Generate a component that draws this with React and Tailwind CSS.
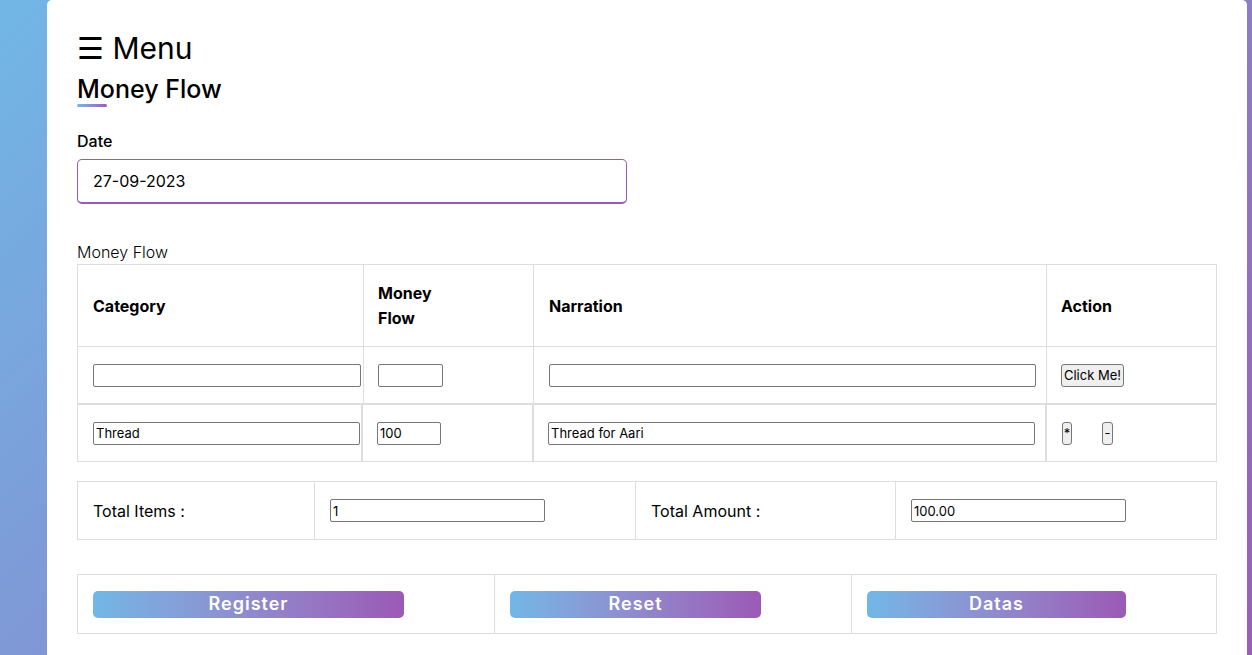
import React, { useState } from 'react';

const inputCls = 'h-[23px] border border-[#767676] rounded-[2px] bg-white px-[2px] text-[13px] text-black outline-none';
const smallBtn = 'h-[23px] border border-[#767676] rounded-[3px] bg-[#efefef] text-[13px] text-black leading-none';
const gradBtn = 'h-[27px] rounded-[5px] bg-gradient-to-r from-[#71b7e6] to-[#9b59b6] text-white text-[18px] font-semibold tracking-[1px] leading-none';

const App = () => {
  const [date, setDate] = useState('27-09-2023');
  const [rows] = useState([{ category: 'Thread', amount: '100', narration: 'Thread for Aari' }]);

  return (
    <div className="min-h-screen bg-[linear-gradient(135deg,#71b7e6,#9b59b6)] bg-[length:100%_760px] bg-no-repeat font-['Inter',sans-serif] text-black flex">
      <div className="ml-[47px] w-[1200px] bg-white rounded-t-[5px] px-[30px] pt-[25px]">
        <div className="h-[45px] flex items-center text-[30px] leading-none">☰ Menu</div>

        {/* title with underline */}
        <div className="relative h-[38px] flex items-center text-[25px] font-medium leading-none">
          Money Flow
          <span className="absolute left-0 bottom-[1px] h-[3px] w-[30px] rounded-[5px] bg-gradient-to-r from-[#71b7e6] to-[#9b59b6]" />
        </div>

        <div className="mt-[21px] h-[24px] flex items-center text-[16px] font-medium">Date</div>
        <input
          value={date}
          onChange={e => setDate(e.target.value)}
          className="mt-[6px] block h-[45px] w-[550px] rounded-[5px] border border-[#9b59b6] border-b-2 pl-[15px] text-[16px] outline-none"
        />

        <div className="mt-[35px] h-[25px] flex items-center text-[16px] font-light">Money Flow</div>

        {/* main table */}
        <div className="w-[1140px] border border-[#dddddd]">
          <div className="grid grid-cols-[285px_170px_513px_170px] h-[82px] border-b border-[#dddddd] text-[16px] font-bold">
            <div className="flex items-center px-[15px]">Category</div>
            <div className="flex items-center px-[14px] border-l border-[#dddddd] leading-[25px]">Money<br />Flow</div>
            <div className="flex items-center px-[15px] border-l border-[#dddddd]">Narration</div>
            <div className="flex items-center px-[14px] border-l border-[#dddddd]">Action</div>
          </div>
          <div className="grid grid-cols-[285px_170px_513px_170px] h-[58px] border-b-2 border-[#dddddd]">
            <div className="flex items-center pl-[15px]"><input className={`${inputCls} w-[268px]`} /></div>
            <div className="flex items-center pl-[14px] border-l border-[#dddddd]"><input className={`${inputCls} w-[65px]`} /></div>
            <div className="flex items-center pl-[15px] border-l border-[#dddddd]"><input className={`${inputCls} w-[487px]`} /></div>
            <div className="flex items-center pl-[14px] border-l border-[#dddddd]">
              <button className={`${smallBtn} w-[63px]`}>Click Me!</button>
            </div>
          </div>
          {rows.map((r, i) => (
            <div key={i} className="grid grid-cols-[285px_171px_513px_169px] h-[56px]">
              <div className="flex items-center pl-[15px] border-r-2 border-[#dddddd]"><input defaultValue={r.category} className={`${inputCls} w-[267px]`} /></div>
              <div className="flex items-center pl-[14px] border-r-2 border-[#dddddd]"><input defaultValue={r.amount} className={`${inputCls} w-[64px]`} /></div>
              <div className="flex items-center pl-[14px] border-r-2 border-[#dddddd]"><input defaultValue={r.narration} className={`${inputCls} w-[487px]`} /></div>
              <div className="flex items-center pl-[15px] gap-[30px]">
                <button className={`${smallBtn} w-[10px] text-[11px]`}>*</button>
                <button className={`${smallBtn} w-[11px] text-[11px]`}>-</button>
              </div>
            </div>
          ))}
        </div>

        {/* totals */}
        <div className="mt-[19px] w-[1140px] h-[59px] border border-[#dddddd] grid grid-cols-[236px_321px_260px_321px] text-[16px]">
          <div className="flex items-center pl-[15px]">Total Items :</div>
          <div className="flex items-center pl-[15px] border-l border-[#dddddd]"><input defaultValue="1" className={`${inputCls} w-[215px]`} /></div>
          <div className="flex items-center pl-[15px] border-l border-[#dddddd]">Total Amount :</div>
          <div className="flex items-center pl-[15px] border-l border-[#dddddd]"><input defaultValue="100.00" className={`${inputCls} w-[215px]`} /></div>
        </div>

        {/* actions */}
        <div className="mt-[34px] w-[1140px] h-[60px] border border-[#dddddd] grid grid-cols-[416px_357px_365px]">
          <div className="flex items-center pl-[15px]"><button className={`${gradBtn} w-[311px]`}>Register</button></div>
          <div className="flex items-center pl-[15px] border-l border-[#dddddd]"><button className={`${gradBtn} w-[251px]`}>Reset</button></div>
          <div className="flex items-center pl-[15px] border-l border-[#dddddd]"><button className={`${gradBtn} w-[259px]`}>Datas</button></div>
        </div>
      </div>
    </div>
  );
};

export default App;
